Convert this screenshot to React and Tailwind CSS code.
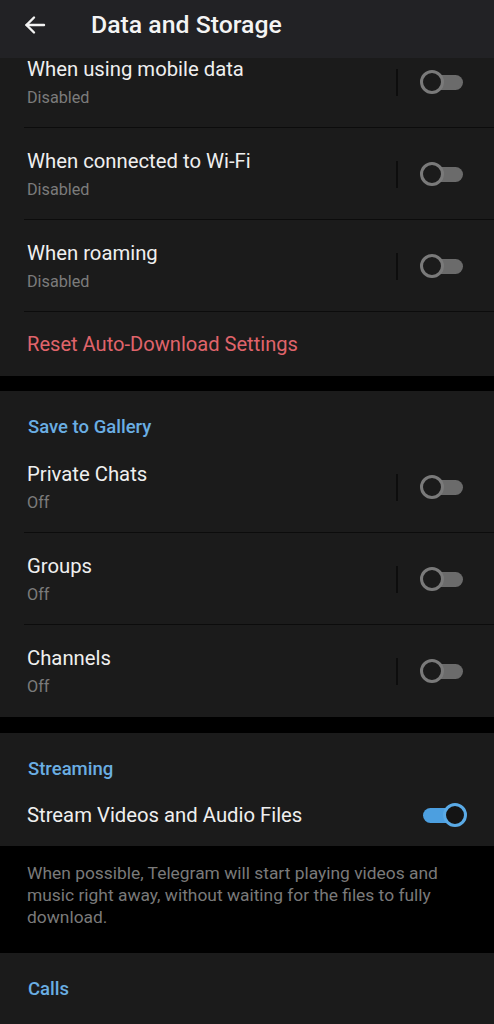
import React from 'react';

const Toggle = ({ on = false }) => {
  if (on) {
    return (
      <div className="relative w-[46px] h-[24px]">
        <div className="absolute left-[2px] top-[5px] w-[36px] h-[15px] rounded-full bg-[#4c9fe0]" />
        <div className="absolute right-0 top-0 w-[24px] h-[24px] rounded-full border-[3px] border-[#5aaae6] bg-[#141414]" />
      </div>
    );
  }
  return (
    <div className="relative w-[46px] h-[24px]">
      <div className="absolute left-[6px] top-[5px] w-[37px] h-[15px] rounded-full bg-[#6b6b6b]" />
      <div className="absolute left-0 top-0 w-[24px] h-[24px] rounded-full border-[3px] border-[#7a7a7a] bg-[#1b1b1b]" />
    </div>
  );
};

// Row with title, subtitle and a switch on the right
const SwitchRow = ({ title, subtitle, on, divider = true }) => (
  <div className="relative h-[92px] flex items-center">
    <div className="flex-1 h-full pl-[27px] pt-[21px]">
      <div className="text-[20.3px] leading-[24px] text-[#efefef]">{title}</div>
      <div className="mt-[6px] text-[16.2px] leading-[22px] text-[#7b7b7b]">{subtitle}</div>
    </div>
    <div className="w-[2px] h-[27px] bg-[#0d0d0d] mr-[22px]" />
    <div className="mr-[28px]">
      <Toggle on={on} />
    </div>
    {divider && <div className="absolute bottom-0 left-[24px] right-0 h-px bg-[#0c0c0c]" />}
  </div>
);

const SectionHeader = ({ children, h = 'h-[50px]', pt = 'pt-[24px]' }) => (
  <div className={`${h} ${pt} pl-[28px] text-[18.5px] leading-[24px] font-medium text-[#6aaee3]`}>
    {children}
  </div>
);

export default function App() {
  return (
    <div
      className="w-[494px] h-[1024px] overflow-hidden bg-black flex flex-col"
      style={{ fontFamily: 'Roboto, "Noto Sans", sans-serif' }}
    >
      {/* App bar */}
      <div className="h-[58px] shrink-0 bg-[#222225] flex items-center z-10">
        <svg className="ml-[23px] mb-[9px]" width="24" height="24" viewBox="0 0 24 24" fill="none" stroke="#f2f2f2" strokeWidth="2.4" strokeLinecap="round" strokeLinejoin="round">
          <path d="M21 12H3.5" />
          <path d="M11 4.5L3.5 12l7.5 7.5" />
        </svg>
        <div className="ml-[44px] mb-[9px] text-[24.8px] font-medium text-[#f4f4f4]">
          Data and Storage
        </div>
      </div>

      <div className="flex-1 overflow-hidden">
        <div className="-mt-[22px]">
          {/* Auto-download */}
          <div className="bg-[#1b1b1b]">
            <SwitchRow title="When using mobile data" subtitle="Disabled" />
            <SwitchRow title="When connected to Wi-Fi" subtitle="Disabled" />
            <SwitchRow title="When roaming" subtitle="Disabled" />
            <div className="h-[64px] pl-[27px] pt-[20px] text-[20.1px] leading-[24px] text-[#e0646b]">
              Reset Auto-Download Settings
            </div>
          </div>

          <div className="h-[15px]" />

          {/* Save to Gallery */}
          <div className="bg-[#1b1b1b]">
            <SectionHeader>Save to Gallery</SectionHeader>
            <SwitchRow title="Private Chats" subtitle="Off" />
            <SwitchRow title="Groups" subtitle="Off" />
            <SwitchRow title="Channels" subtitle="Off" divider={false} />
          </div>

          <div className="h-[16px]" />

          {/* Streaming */}
          <div className="bg-[#1b1b1b]">
            <SectionHeader>Streaming</SectionHeader>
            <div className="h-[63px] flex items-center">
              <div className="flex-1 pl-[27px] text-[20.3px] leading-[24px] text-[#efefef]">
                Stream Videos and Audio Files
              </div>
              <div className="mr-[27px]">
                <Toggle on />
              </div>
            </div>
          </div>

          <div className="h-[107px] pl-[27px] pr-[36px] pt-[16px] text-[17.4px] leading-[22px] text-[#7a7a7a]">
            When possible, Telegram will start playing videos and music right away, without waiting for the files to fully download.
          </div>

          {/* Calls */}
          <div className="bg-[#1b1b1b] h-[100px]">
            <SectionHeader pt="pt-[24px]">Calls</SectionHeader>
          </div>
        </div>
      </div>
    </div>
  );
}
